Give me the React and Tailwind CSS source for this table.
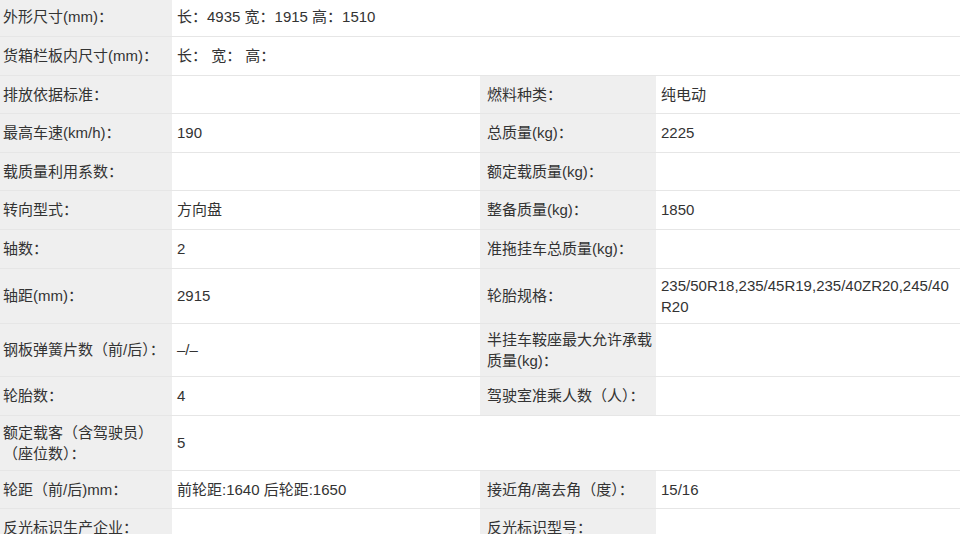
import React from 'react';

// vehicle parameter sheet: label / value pairs, two pairs per row
const ROWS = [
  { h: 'h-[39px]', cells: [['外形尺寸(mm)：', '长：4935 宽：1915 高：1510', 3]] },
  { h: 'h-[39px]', cells: [['货箱栏板内尺寸(mm)：', '长： 宽： 高：', 3]] },
  { h: 'h-[38px]', cells: [['排放依据标准：', ''], ['燃料种类：', '纯电动']] },
  { h: 'h-[39px]', cells: [['最高车速(km/h)：', '190'], ['总质量(kg)：', '2225']] },
  { h: 'h-[38px]', cells: [['载质量利用系数：', ''], ['额定载质量(kg)：', '']] },
  { h: 'h-[39px]', cells: [['转向型式：', '方向盘'], ['整备质量(kg)：', '1850']] },
  { h: 'h-[39px]', cells: [['轴数：', '2'], ['准拖挂车总质量(kg)：', '']] },
  {
    h: 'h-[55px]',
    cells: [
      ['轴距(mm)：', '2915'],
      ['轮胎规格：', <>235/50R18,235/45R19,235/40ZR20,245/40<br />R20</>],
    ],
  },
  { h: 'h-[53px]', cells: [['钢板弹簧片数（前/后）：', '–/–'], ['半挂车鞍座最大允许承载质量(kg)：', '']] },
  { h: 'h-[39px]', cells: [['轮胎数：', '4'], ['驾驶室准乘人数（人）：', '']] },
  { h: 'h-[55px]', cells: [['额定载客（含驾驶员）（座位数）：', '5', 3]] },
  { h: 'h-[38px]', cells: [['轮距（前/后)mm：', '前轮距:1640 后轮距:1650'], ['接近角/离去角（度）：', '15/16']] },
  { h: 'h-[39px]', cells: [['反光标识生产企业：', ''], ['反光标识型号：', '']] },
];

const labelPad = ['pl-[3px] pr-[4px]', 'pl-[7px] pr-[4px]'];

export default function App() {
  return (
    <div
      className="w-[960px] h-[534px] overflow-hidden bg-white text-[#333333]"
      style={{ fontFamily: '"Liberation Sans", "Noto Sans CJK SC", sans-serif' }}
    >
      <table className="-mt-[3px] w-[960px] table-fixed border-collapse text-[15px] leading-[21px]">
        <colgroup>
          <col className="w-[172px]" />
          <col className="w-[308px]" />
          <col className="w-[176px]" />
          <col className="w-[304px]" />
        </colgroup>
        <tbody>
          {ROWS.map((row, i) => (
            <tr key={i} className={`${row.h} border-b border-[#e6e6e6]`}>
              {row.cells.map(([label, value, span], j) => (
                <React.Fragment key={j}>
                  <td className={`bg-[#efefef] align-middle ${labelPad[j]}`}>{label}</td>
                  <td colSpan={span || 1} className="bg-white align-middle pl-[5px] pr-[4px]">
                    {value}
                  </td>
                </React.Fragment>
              ))}
            </tr>
          ))}
        </tbody>
      </table>
    </div>
  );
}
